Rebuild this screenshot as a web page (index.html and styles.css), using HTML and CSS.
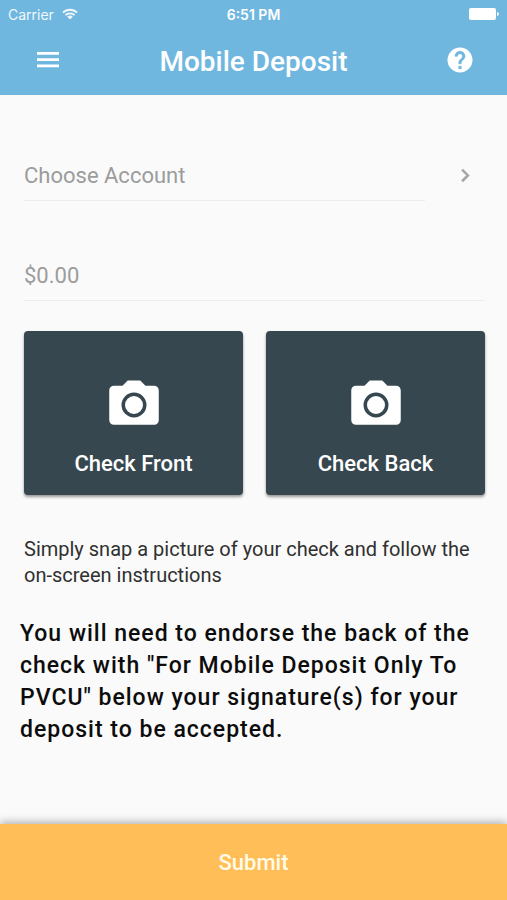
FILE: index.html
```html
<!DOCTYPE html>
<html lang="en">
<head>
<meta charset="utf-8">
<meta name="viewport" content="width=device-width, initial-scale=1">
<title>Mobile Deposit</title>
<link rel="stylesheet" href="styles.css">
</head>
<body>
<div class="screen">
  <header class="top">
    <div class="status">
      <div class="status-carrier">
        <span>Carrier</span>
        <svg class="wifi" viewBox="0 0 16 12" aria-hidden="true">
          <path d="M1 4.600a10 10 0 0 1 14 0M3.400 7.200a6.500 6.500 0 0 1 9.200 0" fill="none" stroke="currentColor" stroke-width="1.800"/>
          <path d="M8 11.600 5.200 8.800a4 4 0 0 1 5.600 0z" fill="currentColor"/>
        </svg>
      </div>
      <div class="status-time">6:51 PM</div>
      <svg class="battery" viewBox="0 0 30 12" aria-hidden="true">
        <rect width="27" height="12" rx="2" fill="currentColor"/>
        <path d="M28 4q2 .5 2 2t-2 2z" fill="currentColor"/>
      </svg>
    </div>
    <div class="bar">
      <button class="icon-button" type="button" aria-label="Menu">
        <svg class="icon-menu" viewBox="0 0 24 24" aria-hidden="true"><path d="M2 4h22.500v2.800H2zM2 10.200h22.500V13H2zM2 16.400h22.500v2.800H2z" fill="currentColor"/></svg>
      </button>
      <h1 class="title">Mobile Deposit</h1>
      <button class="icon-button" type="button" aria-label="Help">
        <svg class="icon-help" viewBox="0 0 24 24" aria-hidden="true"><circle cx="12" cy="12" r="10" fill="currentColor"/><path class="icon-help-mark" d="M13 19h-2v-2h2v2zm2.070-7.750-.9.920C13.450 12.900 13 13.500 13 15h-2v-.5c0-1.100.45-2.100 1.170-2.830l1.240-1.260c.37-.36.590-.86.590-1.410 0-1.100-.9-2-2-2s-2 .9-2 2H8c0-2.210 1.790-4 4-4s4 1.790 4 4c0 .88-.36 1.680-.93 2.250z"/></svg>
      </button>
    </div>
  </header>

  <main class="content">
    <form class="form" id="deposit">
      <label class="account">
        <select class="field" aria-label="Account">
          <option>Choose Account</option>
        </select>
        <svg class="chevron" viewBox="0 0 24 24" aria-hidden="true"><path d="m9.500 6.500 5 5-5 5" fill="none" stroke="currentColor" stroke-width="2.200"/></svg>
      </label>
      <input class="field" type="text" inputmode="decimal" placeholder="$0.00" aria-label="Amount">
      <div class="photos">
        <button class="photo" type="button">
          <svg class="camera" viewBox="0 0 24 24" aria-hidden="true"><path fill="currentColor" d="M9.500 2.200 7.400 4.300H4c-1.100 0-1.900.8-1.900 1.900V18c0 1.100.8 1.900 1.900 1.900h16c1.100 0 1.900-.8 1.900-1.900V6.200c0-1.100-.8-1.900-1.900-1.900h-3.400l-2.100-2.100z"/><circle class="camera-ring" cx="12" cy="12" r="4.300"/></svg>
          <span>Check Front</span>
        </button>
        <button class="photo" type="button">
          <svg class="camera" viewBox="0 0 24 24" aria-hidden="true"><path fill="currentColor" d="M9.500 2.200 7.400 4.300H4c-1.100 0-1.900.8-1.900 1.900V18c0 1.100.8 1.900 1.900 1.900h16c1.100 0 1.900-.8 1.900-1.900V6.200c0-1.100-.8-1.900-1.900-1.900h-3.400l-2.100-2.100z"/><circle class="camera-ring" cx="12" cy="12" r="4.300"/></svg>
          <span>Check Back</span>
        </button>
      </div>
    </form>
    <p class="hint">Simply snap a picture of your check and follow the on-screen instructions</p>
    <p class="notice">You will need to endorse the back of the check with "For Mobile Deposit Only To PVCU" below your signature(s) for your deposit to be accepted.</p>
  </main>

  <button class="submit" type="submit" form="deposit">Submit</button>
</div>
</body>
</html>
```
FILE: styles.css
```css
* {
  box-sizing: border-box;
}

body {
  margin: 0;
  background: #fafafa;
  color: #303030;
  font-family: Roboto, "Liberation Sans", sans-serif;
}

button,
input,
select {
  margin: 0;
  padding: 0;
  border: 0;
  border-radius: 0;
  background: none;
  color: inherit;
  font: inherit;
}

svg {
  display: block;
}

.screen {
  display: flex;
  flex-direction: column;
  min-height: 100vh;
}

.top {
  background: #70b7df;
  color: #fff;
}

.status {
  display: grid;
  grid-template-columns: 1fr auto 1fr;
  align-items: center;
  height: 28px;
  padding: 0 8px;
  font-family: Inter, "Liberation Sans", sans-serif;
  font-size: 14px;
}

.status-carrier {
  display: flex;
  align-items: center;
  gap: 8px;
  opacity: 0.9;
}

.status-time {
  font-weight: 600;
}

.wifi {
  width: 16px;
  height: 12px;
}

.battery {
  justify-self: end;
  width: 30px;
  height: 12px;
}

.bar {
  display: flex;
  align-items: center;
  justify-content: space-between;
  height: 67px;
  padding: 0 23px;
}

.icon-button {
  display: grid;
  place-items: center;
  width: 48px;
  height: 48px;
  padding-bottom: 4px;
}

.icon-menu {
  width: 24px;
  height: 24px;
}

.icon-help {
  width: 30px;
  height: 30px;
}

.icon-help-mark {
  fill: #70b7df;
  stroke: #70b7df;
  stroke-width: 0.5;
}

.title {
  margin: 0;
  font-size: 28px;
  font-weight: 500;
}

.content {
  flex: 1;
  padding: 56px 22px 48px 24px;
}

.account {
  display: grid;
  grid-template-columns: 1fr 60px;
  align-items: center;
  margin-bottom: 50px;
}

.field {
  appearance: none;
  width: 100%;
  height: 50px;
  border-bottom: 1px solid #ededed;
  outline: 0;
  color: #9c9c9c;
  font-size: 22px;
}

.field::placeholder {
  color: #9c9c9c;
  opacity: 1;
}

.chevron {
  justify-self: end;
  width: 28px;
  height: 28px;
  margin-right: 6px;
  color: #a6a6a6;
}

.photos {
  display: grid;
  grid-template-columns: 1fr 1fr;
  gap: 23px;
  margin-top: 30px;
}

.photo {
  display: flex;
  flex-direction: column;
  align-items: center;
  gap: 14px;
  padding: 44px 8px 16px;
  border-radius: 4px;
  background: #37474f;
  box-shadow: 0 2px 3px rgba(0, 0, 0, 0.4);
  color: #fff;
  font-size: 22px;
  font-weight: 500;
  line-height: 30px;
}

.camera {
  width: 60px;
  height: 60px;
}

.camera-ring {
  fill: none;
  stroke: #37474f;
  stroke-width: 1.4;
}

.hint {
  margin: 41px 0 0;
  font-size: 20px;
  line-height: 26px;
}

.notice {
  margin: 30px 0 0 -4px;
  color: #0c0c0c;
  font-size: 23px;
  font-weight: 500;
  letter-spacing: 1px;
  line-height: 32px;
}

.submit {
  height: 76px;
  background: #ffbe57;
  box-shadow: 0 -2px 8px rgba(0, 0, 0, 0.3);
  color: #fffbe8;
  font-size: 22px;
  font-weight: 500;
}
```
